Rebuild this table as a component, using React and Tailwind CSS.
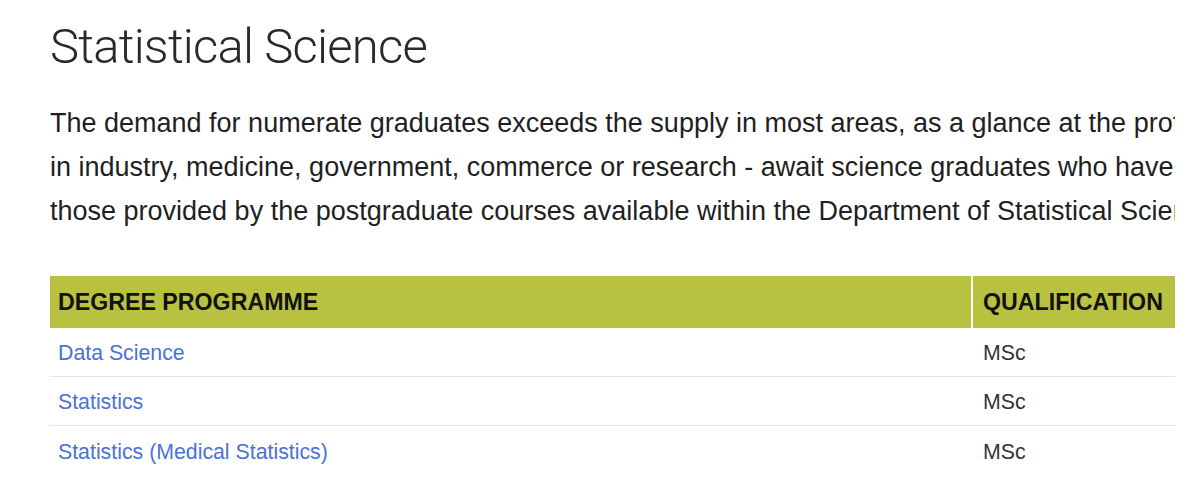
import React from 'react';

const programmes = [
  { name: 'Data Science', qualification: 'MSc' },
  { name: 'Statistics', qualification: 'MSc' },
  { name: 'Statistics (Medical Statistics)', qualification: 'MSc' },
];

const introLines = [
  'The demand for numerate graduates exceeds the supply in most areas, as a glance at the professional appointments',
  'in industry, medicine, government, commerce or research - await science graduates who have skills such as',
  'those provided by the postgraduate courses available within the Department of Statistical Science.',
];

const App = () => {
  return (
    <div className="min-h-[486px] bg-white pl-[50px] pt-[22px] font-['Liberation_Sans',Arial,sans-serif]">
      <div className="w-[1125px] overflow-hidden">
        <h1 className="font-['Roboto',sans-serif] text-[49px] leading-[50px] tracking-[-0.8px] text-[#2a2a2a] font-light">
          Statistical Science
        </h1>

        <div className="mt-[29px] text-[27px] leading-[44px] text-[#1f1f1f]">
          {introLines.map((line) => (
            <p key={line} className="whitespace-nowrap">{line}</p>
          ))}
        </div>

        <div className="mt-[43px]">
          <div className="flex h-[52px] text-[23.2px] font-bold text-[#111]">
            <div className="flex w-[921px] items-center bg-[#b8c240] pl-[8px]">DEGREE PROGRAMME</div>
            <div className="ml-[2px] flex flex-1 items-center bg-[#b8c240] pl-[10px]">QUALIFICATION</div>
          </div>
          {programmes.map((p, i) => (
            <div
              key={p.name}
              className={`flex h-[49px] items-center pt-[4px] text-[21.3px] ${
                i < programmes.length - 1 ? 'border-b border-[#e4e4e4]' : ''
              }`}
            >
              <div className="w-[921px] pl-[8px] text-[#4a72d6]">{p.name}</div>
              <div className="ml-[2px] pl-[10px] text-[#333]">{p.qualification}</div>
            </div>
          ))}
        </div>
      </div>
    </div>
  );
};

export default App;
